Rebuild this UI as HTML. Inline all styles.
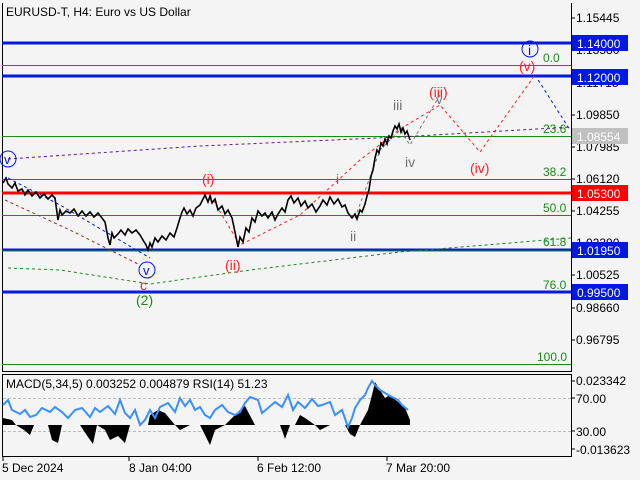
<!DOCTYPE html>
<html><head><meta charset="utf-8"><style>
body{margin:0;width:640px;height:480px;background:#f4f4f4;overflow:hidden}
svg{display:block}
text{font-family:"Liberation Sans",sans-serif;font-size:12px}
</style></head><body>
<svg width="640" height="480" viewBox="0 0 640 480">
<rect width="640" height="480" fill="#f4f4f4"/>
<line x1="2.5" y1="3" x2="2.5" y2="372" stroke="#000"/>
<line x1="571.5" y1="3" x2="571.5" y2="372" stroke="#000"/>
<line x1="2" y1="371.5" x2="572" y2="371.5" stroke="#000"/>
<rect x="2.5" y="374.5" width="569" height="82" fill="none" stroke="#000"/>
<g stroke="#000">
<line x1="571" y1="18" x2="575" y2="18"/><line x1="571" y1="50" x2="575" y2="50"/><line x1="571" y1="83" x2="575" y2="83"/><line x1="571" y1="115" x2="575" y2="115"/><line x1="571" y1="147" x2="575" y2="147"/><line x1="571" y1="179" x2="575" y2="179"/><line x1="571" y1="211" x2="575" y2="211"/><line x1="571" y1="243" x2="575" y2="243"/><line x1="571" y1="275" x2="575" y2="275"/><line x1="571" y1="308" x2="575" y2="308"/><line x1="571" y1="340" x2="575" y2="340"/>
</g>
<g fill="#000">
<text x="576" y="22">1.15445</text><text x="576" y="54">1.13580</text><text x="576" y="87">1.11715</text><text x="576" y="119">1.09850</text><text x="576" y="151">1.07985</text><text x="576" y="183">1.06120</text><text x="576" y="215">1.04255</text><text x="576" y="247">1.02390</text><text x="576" y="279">1.00525</text><text x="576" y="312">0.98660</text><text x="576" y="344">0.96795</text>
</g>
<g stroke="#1a8a1a">
<line x1="2" y1="65.5" x2="571" y2="65.5"/><line x1="2" y1="136.5" x2="571" y2="136.5"/><line x1="2" y1="179.5" x2="571" y2="179.5"/><line x1="2" y1="215.5" x2="571" y2="215.5"/><line x1="2" y1="364.5" x2="571" y2="364.5"/>
</g>
<g fill="#1a8a1a"><text x="543" y="62">0.0</text><text x="543" y="133">23.6</text><text x="543" y="176">38.2</text><text x="543" y="212">50.0</text><text x="543" y="246">61.8</text><text x="543" y="289">76.0</text><text x="537" y="361">100.0</text></g>
<line x1="2" y1="43" x2="571" y2="43" stroke="#0018e0" stroke-width="3"/>
<line x1="2" y1="76" x2="571" y2="76" stroke="#0018e0" stroke-width="3"/>
<line x1="2" y1="249.5" x2="571" y2="249.5" stroke="#0018e0" stroke-width="2"/>
<line x1="2" y1="251" x2="571" y2="251" stroke="#1a8a1a"/>
<line x1="2" y1="292" x2="571" y2="292" stroke="#0018e0" stroke-width="3"/>
<line x1="2" y1="193" x2="571" y2="193" stroke="#ff0000" stroke-width="3"/>
<rect x="572" y="35" width="56" height="16" fill="#0018e0"/><text x="577" y="48" fill="#fff">1.14000</text>
<rect x="572" y="69" width="56" height="16" fill="#0018e0"/><text x="577" y="82" fill="#fff">1.12000</text>
<rect x="572" y="128" width="56" height="16" fill="#c0c0c0"/><text x="577" y="141" fill="#fff">1.08554</text>
<rect x="572" y="185" width="56" height="16" fill="#ff0000"/><text x="577" y="198" fill="#fff">1.05300</text>
<rect x="572" y="242" width="56" height="16" fill="#0018e0"/><text x="577" y="255" fill="#fff">1.01950</text>
<rect x="572" y="284" width="56" height="16" fill="#0018e0"/><text x="577" y="297" fill="#fff">0.99500</text>
<text x="6" y="16" fill="#000">EURUSD-T, H4:  Euro vs US Dollar</text>
<g fill="none" stroke-dasharray="3,3">
<polyline points="8,159 200,146 400,137 571,127" stroke="#5a1a9a"/>
<polyline points="8,268 60,270 150,284 250,270 400,252 571,238" stroke="#1a8a1a"/>
<polyline points="5,200 70,230 140,265" stroke="#9a2a2a"/>
<polyline points="8,178 60,205 150,258" stroke="#0018e0"/>
<polyline points="210,195 240,245 300,215 360,160 400,129 440,105 480,152 535,75" stroke="#ff2020"/>
<polyline points="355,218 380,150 400,130 410,145 440,95" stroke="#707070"/>
<polyline points="535,75 570,130" stroke="#0018e0"/>
</g>
<polyline fill="none" stroke="#000" stroke-width="1.6" points="3,183 6,178 8,184 12,188 15,183 18,191 22,189 25,195 28,190 32,196 36,192 40,198 44,194 48,199 52,195 55,198 58,220 60,210 62,215 66,211 70,213 74,209 78,216 82,211 86,216 90,212 94,217 98,213 102,218 105,222 108,238 110,245 112,233 114,238 118,234 121,230 125,235 128,229 132,233 136,230 140,235 143,240 146,245 148,250 150,243 152,247 155,238 158,242 162,236 166,240 170,233 174,237 177,228 180,218 182,212 184,208 187,214 190,210 193,216 196,208 200,205 203,199 205,195 208,202 210,196 212,203 215,199 218,210 222,206 225,214 228,210 232,218 235,232 238,247 240,237 243,242 246,228 249,232 252,218 255,222 258,211 262,216 265,213 268,218 272,212 275,220 278,214 282,208 285,212 288,200 291,196 294,203 298,198 301,206 305,201 308,208 312,204 316,212 320,206 323,200 327,205 330,197 334,204 338,199 342,207 345,205 348,213 352,218 355,214 357,219 360,210 362,212 365,204 367,196 369,190 371,176 373,170 375,158 377,150 379,153 381,143 383,146 385,139 387,144 389,136 391,138 393,131 395,126 397,129 399,124 401,132 403,128 405,134 407,131 409,137 410,140"/>
<g>
<text x="202" y="184" fill="#ff2020" style="font-size:14px">(i)</text>
<text x="225" y="270" fill="#ff2020" style="font-size:14px">(ii)</text>
<text x="429" y="97" fill="#ff2020" style="font-size:14px">(iii)</text>
<text x="470" y="173" fill="#ff2020" style="font-size:14px">(iv)</text>
<text x="519" y="71" fill="#ff2020" style="font-size:14px">(v)</text>
<text x="393" y="110" fill="#707070" style="font-size:14px">iii</text>
<text x="405" y="167" fill="#707070" style="font-size:14px">iv</text>
<text x="350" y="241" fill="#707070" style="font-size:14px">ii</text>
<text x="336" y="184" fill="#707070" style="font-size:14px">i</text>
<text x="436" y="104" fill="#707070" style="font-size:13px">v</text>
<text x="140" y="290" fill="#c04020" style="font-size:14px">c</text>
<text x="136" y="305" fill="#1a8a1a" style="font-size:14px">(2)</text>
</g>
<circle cx="147" cy="270" r="8" fill="none" stroke="#0018e0"/><text x="143" y="275" fill="#0018e0" style="font-size:13px">v</text>
<circle cx="8" cy="159" r="8" fill="none" stroke="#0018e0"/><text x="4" y="164" fill="#0018e0" style="font-size:13px">v</text>
<circle cx="530" cy="49" r="8" fill="none" stroke="#0018e0"/><text x="528" y="55" fill="#0018e0" style="font-size:14px">i</text>
<line x1="3" y1="398.5" x2="571" y2="398.5" stroke="#bbb" stroke-dasharray="3,2"/>
<line x1="3" y1="431.5" x2="571" y2="431.5" stroke="#bbb" stroke-dasharray="3,2"/>
<path fill="#000" d="M3,425 L3,418 L12,420 L16,425 L24,430 L30,435 L34,425 L48,425 L52,440 L58,443 L62,425 L80,425 L88,437 L93,444 L97,425 L105,430 L110,440 L118,436 L125,443 L130,425 L148,425 L150,415 L158,410 L165,413 L175,425 L180,430 L190,425 L200,425 L205,435 L210,445 L215,430 L225,425 L240,410 L245,406 L255,425 L280,425 L283,433 L285,439 L290,425 L295,425 L300,415 L305,418 L315,425 L320,430 L330,425 L345,425 L350,434 L355,437 L360,425 L368,410 L372,395 L375,382 L380,390 L385,398 L390,395 L398,402 L405,408 L410,420 L410,425 Z"/>
<polyline fill="none" stroke="#3a90ff" stroke-width="2" points="3,405 8,400 12,410 20,414 25,410 30,417 36,415 42,408 50,412 55,407 62,412 68,418 75,410 82,408 90,417 95,408 100,412 108,406 115,414 120,400 125,413 130,418 135,410 140,425 145,420 150,410 155,418 160,407 168,403 175,412 180,398 185,406 190,400 195,410 200,407 205,415 210,418 215,410 222,405 228,412 235,415 240,412 245,403 250,397 258,400 262,413 268,408 275,402 282,407 288,395 293,410 298,402 305,408 312,399 318,406 322,405 330,402 335,415 342,410 348,427 352,418 355,408 360,400 365,395 368,388 372,381 375,385 380,390 385,393 390,396 398,400 402,405 408,410"/>
<text x="6" y="388" fill="#000">MACD(5,34,5) 0.003252 0.004879 RSI(14) 51.23</text>
<g stroke="#000"><line x1="571" y1="381" x2="575" y2="381"/><line x1="571" y1="398" x2="575" y2="398"/><line x1="571" y1="431" x2="575" y2="431"/><line x1="571" y1="449" x2="575" y2="449"/></g>
<g fill="#000"><text x="576" y="385">0.023342</text><text x="576" y="403">70.00</text><text x="576" y="436">30.00</text><text x="576" y="454">-0.013623</text></g>
<g stroke="#000"><line x1="3" y1="457" x2="3" y2="461"/><line x1="129" y1="457" x2="129" y2="461"/><line x1="258" y1="457" x2="258" y2="461"/><line x1="387" y1="457" x2="387" y2="461"/></g>
<g fill="#000"><text x="2" y="472">5 Dec 2024</text><text x="129" y="472">8 Jan 04:00</text><text x="257" y="472">6 Feb 12:00</text><text x="386" y="472">7 Mar 20:00</text></g>
</svg>
</body></html>
